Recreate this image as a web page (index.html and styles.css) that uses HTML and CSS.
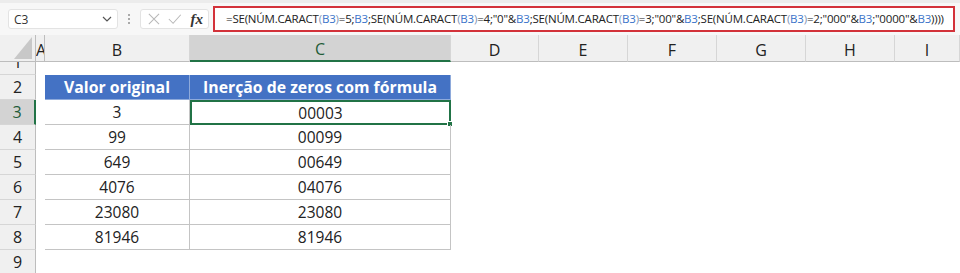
FILE: index.html
```html
<!DOCTYPE html>
<html lang="pt">
<head>
<meta charset="utf-8">
<title>Inserção de zeros</title>
<link rel="stylesheet" href="styles.css">
</head>
<body>
<div class="formula-bar">
<div class="name-box">
<span>C3</span>
<svg class="chevron" width="10" height="6" viewBox="0 0 10 6"><path d="M1 1 L5 5 L9 1" fill="none" stroke="#555" stroke-width="1.2"/></svg>
</div>
<div class="grip"><i></i><i></i><i></i></div>
<div class="fx-box">
<svg width="14" height="14" viewBox="0 0 14 14"><path d="M1 1 L13 13 M13 1 L1 13" stroke="#b8b8b8" stroke-width="1.2" fill="none"/></svg>
<svg width="16" height="14" viewBox="0 0 16 14"><path d="M1 7 L6 12 L15 2" stroke="#b8b8b8" stroke-width="1.2" fill="none"/></svg>
<span class="fx">fx</span>
</div>
<div class="formula">=SE(NÚM.CARACT<span class="p">(</span><span class="ref">B3</span><span class="p">)</span>=5;<span class="ref">B3</span>;SE(NÚM.CARACT<span class="p">(</span><span class="ref">B3</span><span class="p">)</span>=4;"0"&amp;<span class="ref">B3</span>;SE(NÚM.CARACT<span class="p">(</span><span class="ref">B3</span><span class="p">)</span>=3;"00"&amp;<span class="ref">B3</span>;SE(NÚM.CARACT<span class="p">(</span><span class="ref">B3</span><span class="p">)</span>=2;"000"&amp;<span class="ref">B3</span>;"0000"&amp;<span class="ref">B3</span>))))</div>
</div>

<div class="sheet">
<div class="corner"></div>
<div class="col-head col-a">A</div>
<div class="col-head">B</div>
<div class="col-head active">C</div>
<div class="col-head">D</div>
<div class="col-head">E</div>
<div class="col-head">F</div>
<div class="col-head">G</div>
<div class="col-head">H</div>
<div class="col-head">I</div>

<div class="row-head first"><span>1</span></div>
<div class="blank span-all"></div>

<div class="row-head">2</div>
<div class="blank"></div>
<div class="cell th">Valor original</div>
<div class="cell th">Inerção de zeros com fórmula</div>
<div class="blank rest"></div>

<div class="row-head active">3</div>
<div class="blank"></div>
<div class="cell">3</div>
<div class="cell selected">00003<b class="handle"></b></div>
<div class="blank rest"></div>

<div class="row-head">4</div>
<div class="blank"></div>
<div class="cell">99</div>
<div class="cell">00099</div>
<div class="blank rest"></div>

<div class="row-head">5</div>
<div class="blank"></div>
<div class="cell">649</div>
<div class="cell">00649</div>
<div class="blank rest"></div>

<div class="row-head">6</div>
<div class="blank"></div>
<div class="cell">4076</div>
<div class="cell">04076</div>
<div class="blank rest"></div>

<div class="row-head">7</div>
<div class="blank"></div>
<div class="cell">23080</div>
<div class="cell">23080</div>
<div class="blank rest"></div>

<div class="row-head">8</div>
<div class="blank"></div>
<div class="cell">81946</div>
<div class="cell">81946</div>
<div class="blank rest"></div>

<div class="row-head">9</div>
<div class="blank span-all"></div>
</div>
</body>
</html>
```

FILE: styles.css
```css
* {
margin: 0;
padding: 0;
box-sizing: border-box;
}

body {
width: 960px;
height: 273px;
overflow: hidden;
background: #fff;
font-family: "Open Sans", "Noto Sans", sans-serif;
color: #222;
}

.formula-bar {
display: flex;
align-items: center;
height: 35px;
padding: 0 5px 0 8px;
background: #f7f7f7;
border-top: 3px solid #ececec;
}

.name-box {
display: flex;
align-items: center;
justify-content: space-between;
width: 110px;
height: 20px;
padding: 0 5px 0 5px;
background: #fff;
border: 1px solid #e3e3e3;
border-radius: 3px;
font-size: 12px;
color: #333;
}

.grip {
display: flex;
flex-direction: column;
gap: 2px;
margin: 0 10px;
}

.grip i {
width: 2px;
height: 2px;
background: #aaa;
}

.fx-box {
display: flex;
align-items: center;
gap: 8px;
width: 69px;
height: 20px;
padding: 0 5px 0 7px;
background: #fff;
border: 1px solid #e3e3e3;
border-radius: 3px;
}

.fx {
font-family: "Liberation Serif", serif;
font-style: italic;
font-size: 15px;
font-weight: bold;
color: #333;
margin-left: 1px;
}

.formula {
flex: 1;
height: 26px;
margin-left: 4px;
padding: 0 0 0 11px;
line-height: 22px;
background: #fff;
border: 2px solid #d3323a;
font-size: 11.5px;
letter-spacing: -0.2px;
color: #222;
white-space: nowrap;
overflow: hidden;
}

.formula .ref {
color: #3a73c9;
}

.formula .p {
color: #7f95b8;
}

.sheet {
display: grid;
grid-template-columns: 36px 9px 145px 261px 88px 89px 89px 89px 89px 1fr;
grid-template-rows: 27px 13px repeat(8, 25px);
}

.corner {
background: #f0f0f0;
border-right: 1px solid #bdbdbd;
border-bottom: 1px solid #bdbdbd;
position: relative;
}

.corner::after {
content: "";
position: absolute;
right: 3px;
bottom: 2px;
width: 18px;
height: 22px;
background: #c8c8c8;
clip-path: polygon(100% 0, 100% 100%, 0 100%);
}

.col-head {
display: flex;
align-items: center;
justify-content: center;
background: #f0f0f0;
border-right: 1px solid #d6d6d6;
border-bottom: 1px solid #bdbdbd;
font-size: 16px;
color: #222;
padding-top: 3px;
}

.col-head.col-a {
justify-content: flex-start;
overflow: hidden;
border-right-color: #bdbdbd;
}

.col-head.active {
background: #d3d3d3;
border-bottom: 2px solid #217346;
color: #1f5c38;
}

.col-head:last-child {
border-right: none;
}

.row-head {
display: flex;
align-items: center;
justify-content: center;
background: #f0f0f0;
border-right: 1px solid #bdbdbd;
border-bottom: 1px solid #d6d6d6;
font-size: 16px;
color: #222;
}

.row-head.first {
overflow: hidden;
align-items: flex-start;
}

.row-head.first span {
line-height: 22px;
margin-top: -11px;
}

.row-head.active {
background: #d3d3d3;
border-right: 2px solid #217346;
color: #1f5c38;
}

.blank {
background: #fff;
}

.span-all {
grid-column: 2 / -1;
}

.rest {
grid-column: 5 / -1;
}

.cell {
display: flex;
align-items: center;
justify-content: center;
border-right: 1px solid #c4c4c4;
border-bottom: 1px solid #c4c4c4;
font-size: 15.5px;
color: #222;
position: relative;
}

.cell:nth-child(5n+3) {
border-left: 1px solid #c4c4c4;
}

.cell.th {
background: #4472c4;
color: #fff;
font-weight: bold;
font-size: 15.8px;
border-color: #8eaadb;
}

.cell.selected {
border: 2px solid #217346;
}

.handle {
position: absolute;
right: -4px;
bottom: -4px;
width: 6px;
height: 6px;
background: #217346;
border: 1px solid #fff;
}
```
